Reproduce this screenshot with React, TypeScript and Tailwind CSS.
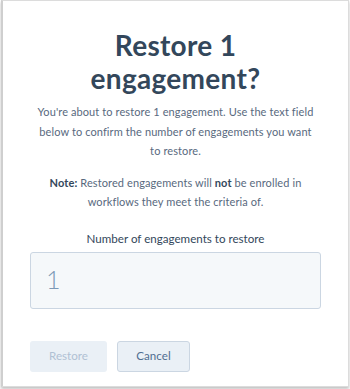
export default function App() {
  return (
    <div className="w-[350px] h-[389px] bg-white" style={{ fontFamily: 'Lato, "Noto Sans", sans-serif' }}>
      <div className="w-[348px] h-[387px] ml-[1px] bg-white border border-[#dcdcdc] border-l-2 border-l-[#cfcfcf] shadow-[0_2px_3px_rgba(0,0,0,0.25)] flex flex-col items-center px-[29px]">
        <h1 className="mt-[28px] text-[28px] leading-[33px] font-bold text-[#33475b] text-center tracking-[0.3px]">
          Restore 1<br />engagement?
        </h1>
        <p className="mt-[7px] text-[11px] leading-[19.5px] text-[#58697e] text-center tracking-[0.1px]">
          You're about to restore 1 engagement. Use the text field
          <br />
          below to confirm the number of engagements you want
          <br />
          to restore.
        </p>
        <p className="mt-[12px] text-[11px] leading-[19.5px] text-[#58697e] text-center tracking-[0.1px]">
          <span className="font-bold text-[#33475b]">Note:</span> Restored engagements will{' '}
          <span className="font-bold text-[#33475b]">not</span> be enrolled in
          <br />
          workflows they meet the criteria of.
        </p>
        <label className="mt-[17px] text-[11.6px] leading-[20px] text-[#33475b] text-center">
          Number of engagements to restore
        </label>
        <div className="mt-[3px] w-[291px] h-[57px] bg-[#f5f8fa] border border-[#cbd6e2] rounded-[3px] flex items-center px-[15px]">
          <span className="text-[25px] font-light text-[#7c98b6]">1</span>
        </div>
        <div className="mt-[32px] w-[291px] flex gap-[10px]">
          <button className="w-[77px] h-[31px] rounded-[3px] bg-[#eaf0f6] text-[11.6px] text-[#b0c1d4]">Restore</button>
          <button className="w-[73px] h-[31px] rounded-[3px] bg-[#eaf0f6] border border-[#cbd6e2] text-[11.6px] text-[#506e91]">Cancel</button>
        </div>
      </div>
    </div>
  );
}
